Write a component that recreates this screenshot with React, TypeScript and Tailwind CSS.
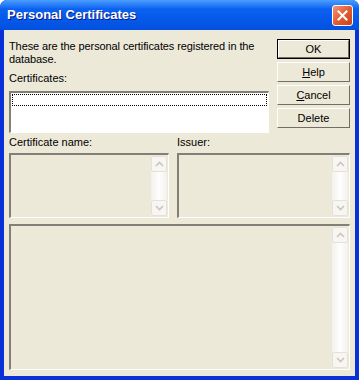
import React from 'react';

const font = { fontFamily: '"Liberation Sans", Arial, sans-serif' };

function ScrollBar() {
    return (
        <div className="flex h-full w-[16px] flex-col bg-gradient-to-r from-[#f3f1ec] via-[#fefefe] to-[#f3f1ec]">
            <div className="flex h-[16px] w-[16px] items-center justify-center rounded-[2px] border border-[#e3e1d8] bg-[#f7f6f2]">
                <svg width="9" height="6" viewBox="0 0 9 6">
                    <path d="M1 5 L4.5 1.5 L8 5" fill="none" stroke="#c9c7ba" strokeWidth="1.6" />
                </svg>
            </div>
            <div className="flex-1" />
            <div className="flex h-[16px] w-[16px] items-center justify-center rounded-[2px] border border-[#e3e1d8] bg-[#f7f6f2]">
                <svg width="9" height="6" viewBox="0 0 9 6">
                    <path d="M1 1 L4.5 4.5 L8 1" fill="none" stroke="#c9c7ba" strokeWidth="1.6" />
                </svg>
            </div>
        </div>
    );
}

function Sunken({ className, children }: { className: string; children?: React.ReactNode }) {
    return (
        <div className={`border-t-2 border-l-2 border-t-[#817f76] border-l-[#817f76] border-r border-b border-r-white border-b-white ${className}`}>
            {children}
        </div>
    );
}

function Button({ label, def, u }: { label: string; def?: boolean; u?: number }) {
    const text =
        u === undefined ? label : (
            <>
                {label.slice(0, u)}
                <span className="underline">{label[u]}</span>
                {label.slice(u + 1)}
            </>
        );
    return (
        <div className={`h-[20px] w-[73px] ${def ? 'border border-black' : ''}`}>
            <div className="flex h-full w-full items-center justify-center border border-t-white border-l-white border-r-[#716f64] border-b-[#716f64] bg-[#ece9d8] text-[11px] text-black">
                {text}
            </div>
        </div>
    );
}

export default function App() {
    return (
        <div className="h-[380px] w-[359px] overflow-hidden bg-white" style={font}>
            <div className="flex h-full w-full flex-col rounded-t-[7px] bg-[#0831d9]">
                {/* Title bar */}
                <div className="flex h-[30px] items-center justify-between rounded-t-[7px] bg-gradient-to-b from-[#4a9dff] via-[#0a61f0] via-[30%] to-[#0350e0] pl-[7px] pr-[6px]">
                    <span className="text-[13px] font-bold text-white [text-shadow:1px_1px_0_#0a1883]">Personal Certificates</span>
                    <div className="flex h-[21px] w-[21px] items-center justify-center rounded-[3px] border border-white bg-gradient-to-br from-[#f0937a] via-[#e35d2f] to-[#c9421b]">
                        <svg width="11" height="11" viewBox="0 0 11 11">
                            <path d="M1.5 1.5 L9.5 9.5 M9.5 1.5 L1.5 9.5" stroke="white" strokeWidth="2" strokeLinecap="square" />
                        </svg>
                    </div>
                </div>
                {/* Client */}
                <div className="mx-[4px] mb-[4px] flex-1 bg-[#ece9d8] pl-[5px] pr-[5px] pt-[9px] text-[11px] leading-[13px] text-black">
                    <div className="flex gap-[8px]">
                        <div className="flex w-[260px] flex-col">
                            <div className="mt-[1px] w-[266px] tracking-[-0.1px]">These are the personal certificates registered in the database.</div>
                            <div className="mt-[6px]">Certificates:</div>
                            <Sunken className="mt-[6px] h-[42px] bg-white p-[1px]">
                                <div className="h-[12px] w-full border border-dotted border-black" />
                            </Sunken>
                        </div>
                        <div className="flex flex-col gap-[3px]">
                            <Button label="OK" def />
                            <Button label="Help" u={0} />
                            <Button label="Cancel" u={0} />
                            <Button label="Delete" />
                        </div>
                    </div>
                    <div className="mt-[3px] flex gap-[8px]">
                        <div className="flex w-[160px] flex-col">
                            <div>Certificate name:</div>
                            <Sunken className="mt-[4px] flex h-[65px] justify-end p-[1px]">
                                <ScrollBar />
                            </Sunken>
                        </div>
                        <div className="flex flex-1 flex-col">
                            <div>Issuer:</div>
                            <Sunken className="mt-[4px] flex h-[65px] justify-end p-[1px]">
                                <ScrollBar />
                            </Sunken>
                        </div>
                    </div>
                    <Sunken className="mt-[6px] flex h-[146px] justify-end p-[1px]">
                        <ScrollBar />
                    </Sunken>
                </div>
            </div>
        </div>
    );
}
